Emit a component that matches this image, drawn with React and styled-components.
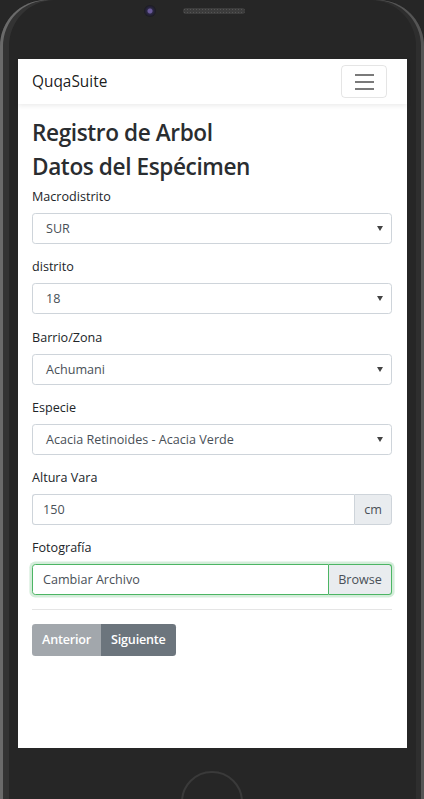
import React from "react";
import styled, { createGlobalStyle } from "styled-components";

const Global = createGlobalStyle`
  html, body { margin: 0; padding: 0; background: #262626; }
  body { font-family: "Segoe UI", "Open Sans", "Noto Sans", sans-serif; }
  * { box-sizing: border-box; }
`;

const Phone = styled.div`
  width: 424px;
  height: 799px;
  background: #262626;
  border-radius: 46px 46px 0 0;
  box-shadow: inset 3px 0 0 #6a6a6a, inset 9px 0 0 #333333, inset -3px 0 0 #555, inset -8px 0 0 #2e2e2e;
  display: flex;
  flex-direction: column;
  overflow: hidden;
`;

const TopBezel = styled.div`
  height: 59px;
  flex: none;
  display: flex;
  align-items: flex-start;
  padding: 5px 0 0 144px;
  gap: 27px;
`;

const Camera = styled.div`
  width: 12px;
  height: 12px;
  border-radius: 50%;
  background: radial-gradient(circle at 50% 50%, #6a5a9a 0 2px, #2c2846 3px, #1a1a1f 6px);
`;

const Speaker = styled.div`
  width: 62px;
  height: 6px;
  margin-top: 3px;
  border-radius: 3px;
  background: #3c3c3c;
  background-image: radial-gradient(#555 0.8px, transparent 0.9px);
  background-size: 3px 3px;
`;

const Screen = styled.div`
  flex: none;
  height: 689px;
  margin: 0 17px 0 18px;
  background: #fff;
  display: flex;
  flex-direction: column;
`;

const BottomBezel = styled.div`
  flex: 1;
  display: flex;
  justify-content: center;
  padding: 23px 0 0 0;
`;

const HomeButton = styled.div`
  width: 62px;
  height: 62px;
  border-radius: 50%;
  border: 2px solid #3a3a3a;
`;

const Navbar = styled.nav`
  height: 45px;
  flex: none;
  display: flex;
  align-items: center;
  justify-content: space-between;
  padding: 0 20px 0 14px;
  box-shadow: 0 2px 5px rgba(0, 0, 0, 0.08);
  position: relative;
`;

const Brand = styled.span`
  font-size: 15.4px;
  color: rgba(0, 0, 0, 0.9);
`;

const Toggler = styled.button`
  width: 46px;
  height: 33px;
  border: 1px solid rgba(0, 0, 0, 0.1);
  border-radius: 4px;
  background: transparent;
  display: flex;
  flex-direction: column;
  align-items: center;
  justify-content: center;
  gap: 5px;
  padding: 0;
`;

const Bar = styled.span`
  width: 19px;
  height: 2px;
  background: #7a7a7a;
`;

const Content = styled.main`
  padding: 15px 15px 0 14px;
  color: #212529;
`;

const Heading = styled.h3`
  margin: 0 0 6.4px 0;
  font-size: 22.6px;
  font-weight: 600;
  letter-spacing: -0.4px;
  line-height: 27.6px;
  color: #2a2d30;
`;

const Group = styled.div`
  margin-bottom: 13.2px;
`;

const Label = styled.label`
  display: block;
  font-size: 12.6px;
  line-height: 19.6px;
  margin-bottom: 6.5px;
`;

const SelectBox = styled.div`
  height: 31px;
  border: 1px solid #ced4da;
  border-radius: 3.3px;
  display: flex;
  align-items: center;
  justify-content: space-between;
  padding: 0 8px 0 13px;
  font-size: 12.6px;
  color: #495057;
`;

const Caret = styled.svg`
  width: 6px;
  height: 5px;
`;

const InputGroup = styled.div`
  display: flex;
  height: 31px;
  border-radius: 3.3px;
  box-shadow: ${(p) => (p.$valid ? "0 0 0 2.6px rgba(40,167,69,.2)" : "none")};
`;

const TextInput = styled.div`
  flex: 1;
  border: 1px solid ${(p) => (p.$valid ? "#4cb564" : "#ced4da")};
  border-right: ${(p) => (p.$valid ? "1px solid #4cb564" : "0")};
  border-radius: 3.3px 0 0 3.3px;
  display: flex;
  align-items: center;
  padding: 0 10px;
  font-size: 12.6px;
  color: #495057;
`;

const Addon = styled.div`
  flex: none;
  width: ${(p) => p.$w}px;
  border: 1px solid ${(p) => (p.$valid ? "#4cb564" : "#ced4da")};
  border-left: ${(p) => (p.$valid ? "0" : "1px solid #ced4da")};
  border-radius: 0 3.3px 3.3px 0;
  background: #e9ecef;
  display: flex;
  align-items: center;
  justify-content: center;
  font-size: 12.6px;
  color: #495057;
`;

const Rule = styled.hr`
  border: 0;
  border-top: 1px solid rgba(0, 0, 0, 0.1);
  margin: 0 0 14px 0;
`;

const BtnGroup = styled.div`
  display: inline-flex;
`;

const Btn = styled.button`
  height: 32px;
  border: 0;
  padding: 0 ${(p) => p.$px}px;
  background: ${(p) => (p.$disabled ? "#a2a7ac" : "#6c757d")};
  color: #fff;
  font-family: inherit;
  font-size: 12.6px;
  font-weight: 600;
  letter-spacing: -0.2px;
  border-radius: ${(p) => (p.$first ? "3.3px 0 0 3.3px" : "0 3.3px 3.3px 0")};
`;

const Select = ({ label, value }) => (
  <Group>
    <Label>{label}</Label>
    <SelectBox>
      <span>{value}</span>
      <Caret viewBox="0 0 6 5">
        <path d="M0 0h6L3 5z" fill="#444" />
      </Caret>
    </SelectBox>
  </Group>
);

export default function App() {
  return (
    <>
      <Global />
      <Phone>
        <TopBezel>
          <Camera />
          <Speaker />
        </TopBezel>
        <Screen>
          <Navbar>
            <Brand>QuqaSuite</Brand>
            <Toggler aria-label="menu">
              <Bar />
              <Bar />
              <Bar />
            </Toggler>
          </Navbar>
          <Content>
            <Heading>Registro de Arbol</Heading>
            <Heading>Datos del Espécimen</Heading>
            <Select label="Macrodistrito" value="SUR" />
            <Select label="distrito" value="18" />
            <Select label="Barrio/Zona" value="Achumani" />
            <Select label="Especie" value="Acacia Retinoides - Acacia Verde" />
            <Group>
              <Label>Altura Vara</Label>
              <InputGroup>
                <TextInput>150</TextInput>
                <Addon $w={38}>cm</Addon>
              </InputGroup>
            </Group>
            <Group>
              <Label>Fotografía</Label>
              <InputGroup $valid>
                <TextInput $valid>Cambiar Archivo</TextInput>
                <Addon $w={63} $valid>Browse</Addon>
              </InputGroup>
            </Group>
            <Rule />
            <BtnGroup>
              <Btn $first $disabled $px={10}>Anterior</Btn>
              <Btn $px={10}>Siguiente</Btn>
            </BtnGroup>
          </Content>
        </Screen>
        <BottomBezel>
          <HomeButton />
        </BottomBezel>
      </Phone>
    </>
  );
}
